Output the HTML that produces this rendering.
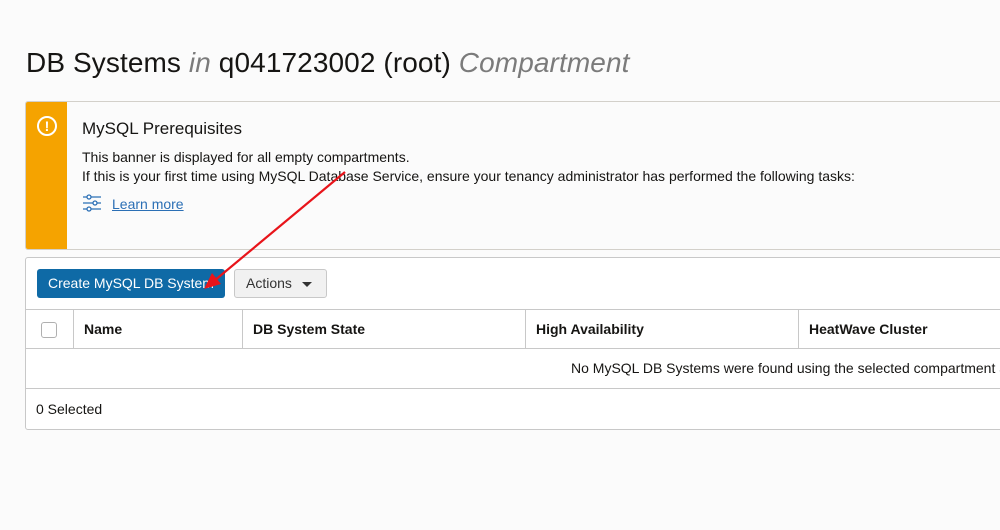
<!DOCTYPE html>
<html><head><style>
*{box-sizing:border-box;margin:0;padding:0}
html,body{width:1000px;height:530px;overflow:hidden}
body{background:#fbfbfb;font-family:"Liberation Sans",Arial,sans-serif;color:#161513;position:relative}
#wrap{position:absolute;left:0;top:0;width:1000px;height:530px;overflow:hidden}
h1{position:absolute;left:26px;top:47px;font-size:28px;font-weight:normal;white-space:nowrap;letter-spacing:0.1px}
h1 i{color:#7b7b7b}
.banner{position:absolute;left:25px;top:101px;width:990px;height:149px;border:1px solid #d3d0ca;border-radius:3px;background:#fbfbfb;overflow:hidden}
.bar{position:absolute;left:0;top:0;width:41px;height:100%;background:#f5a300}
.icon{position:absolute;left:11px;top:14px;width:20px;height:20px;border:2px solid #fff;border-radius:50%;color:#fff;font-weight:bold;font-size:14px;text-align:center;line-height:16px}
.bt{position:absolute;left:56px;top:17px;font-size:17px}
.bp{position:absolute;left:56px;top:46px;font-size:14px;line-height:19px;white-space:nowrap}
.lm{position:absolute;left:56px;top:93px;font-size:14px;color:#2b6fb5}
.lm a{color:#2b6fb5;text-decoration:underline;margin-left:10px}
.panel{position:absolute;left:25px;top:257px;width:990px;height:173px;border:1px solid #c8c8c8;border-radius:3px;background:#fff;overflow:hidden}
.btn1{position:absolute;left:11px;top:11px;width:188px;height:29px;background:#0f6aa6;color:#fff;font-size:14px;border-radius:3px;line-height:29px;text-align:center}
.btn2{position:absolute;left:208px;top:11px;width:93px;height:29px;background:#f1f1f1;border:1px solid #c8c8c8;border-radius:3px;font-size:14px;line-height:27px;padding-left:11px;color:#333}
.btn2:after{content:"";position:absolute;left:67px;top:12px;border:5px solid transparent;border-top:5px solid #333}
.thead{position:absolute;left:0;top:51px;width:100%;height:40px;border-top:1px solid #c8c8c8;border-bottom:1px solid #c8c8c8}
.th{position:absolute;top:0;height:39px;line-height:38px;font-size:14px;font-weight:bold;padding-left:10px;border-left:1px solid #c8c8c8}
.cb{position:absolute;left:15px;top:12px;width:16px;height:16px;border:1px solid #b0b0b0;border-radius:3px}
.empty{position:absolute;left:545px;top:102px;font-size:14px;white-space:nowrap}
.foot{position:absolute;left:0;top:130px;width:100%;border-top:1px solid #c8c8c8;padding:12px 10px;font-size:14px}
svg.ov{position:absolute;left:0;top:0}
</style></head><body><div id="wrap">
<h1>DB Systems <i>in</i> q041723002 (root) <i>Compartment</i></h1>
<div class="banner"><div class="bar"><div class="icon">!</div></div>
<div class="bt">MySQL Prerequisites</div>
<div class="bp">This banner is displayed for all empty compartments.<br>If this is your first time using MySQL Database Service, ensure your tenancy administrator has performed the following tasks:</div>
<div class="lm"><svg width="20" height="20" style="position:relative;vertical-align:middle;top:-2px" viewBox="0 0 20 20" fill="none" stroke="#2b6fb5" stroke-width="1.3"><line x1="1" y1="4" x2="19" y2="4"/><circle cx="7" cy="4" r="2" fill="#fff"/><line x1="1" y1="10" x2="19" y2="10"/><circle cx="13" cy="10" r="2" fill="#fff"/><line x1="1" y1="16" x2="19" y2="16"/><circle cx="7" cy="16" r="2" fill="#fff"/></svg><a>Learn more</a></div>
</div>
<div class="panel">
<div class="btn1">Create MySQL DB System</div>
<div class="btn2">Actions</div>
<div class="thead"><div class="cb"></div>
<div class="th" style="left:47px;width:169px">Name</div>
<div class="th" style="left:216px;width:283px">DB System State</div>
<div class="th" style="left:499px;width:273px">High Availability</div>
<div class="th" style="left:772px;width:218px">HeatWave Cluster</div></div>
<div class="empty">No MySQL DB Systems were found using the selected compartment and filters.</div>
<div class="foot">0 Selected</div>
</div>
<svg class="ov" width="1000" height="530"><line x1="345" y1="172" x2="214" y2="281" stroke="#e8141a" stroke-width="2.2"/><polygon points="204,289 212,273 221,284" fill="#e8141a"/></svg>
</div></body></html>
